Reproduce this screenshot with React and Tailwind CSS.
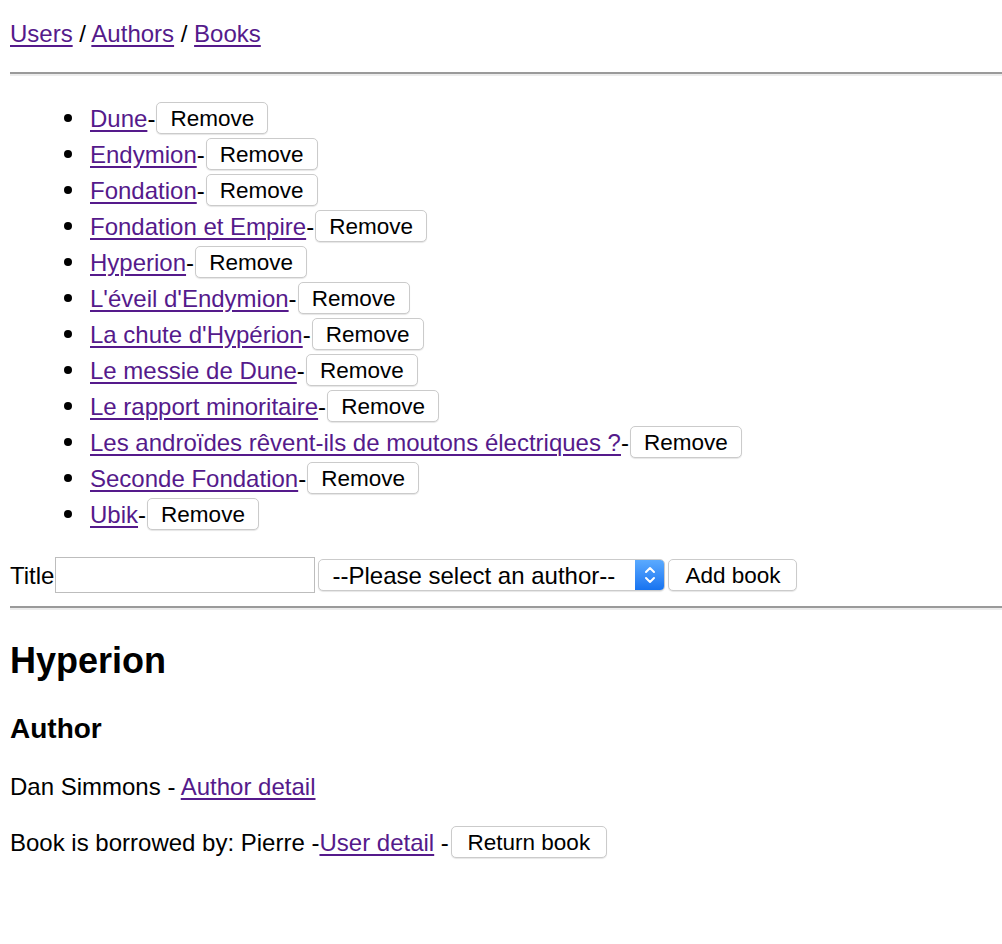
import React from "react";

const books = [
  "Dune",
  "Endymion",
  "Fondation",
  "Fondation et Empire",
  "Hyperion",
  "L'éveil d'Endymion",
  "La chute d'Hypérion",
  "Le messie de Dune",
  "Le rapport minoritaire",
  "Les androïdes rêvent-ils de moutons électriques ?",
  "Seconde Fondation",
  "Ubik",
];

const linkCls = "text-[#551a8b] underline decoration-[1.5px] underline-offset-[3px]";

function Button({ children, className = "" }) {
  return (
    <button
      className={
        "flex h-[32px] items-center justify-center pt-[2px] border border-[#cbcbcb] rounded-[5px] bg-white text-[22.5px] leading-none text-black shadow-[0_1px_1px_rgba(0,0,0,0.1)] " +
        className
      }
    >
      {children}
    </button>
  );
}

function Rule({ className }) {
  return (
    <div
      className={
        "h-[4px] border-t-2 border-b-2 border-t-[#9a9a9a] border-b-[#ececec] " +
        className
      }
    />
  );
}

export default function App() {
  return (
    <div className="min-h-screen bg-white pl-[8px] pt-[20px] font-['Liberation_Sans',Arial,sans-serif] text-[24px] leading-[27px] text-black">
      {/* breadcrumb */}
      <nav className="h-[27px] whitespace-pre pl-[2px]">
        <a href="#" className={linkCls}>Users</a>
        {" / "}
        <a href="#" className={linkCls}>Authors</a>
        {" / "}
        <a href="#" className={linkCls}>Books</a>
      </nav>

      <Rule className="mt-[25px] ml-[2px]" />

      {/* books list */}
      <ul className="mt-[24px] pl-[56px]">
        {books.map((b) => (
          <li key={b} className="flex h-[36px] items-center">
            <span className="mr-[18px] h-[8px] w-[8px] rounded-full bg-black" />
            <a href="#" className={linkCls}>{b}</a>
            <span className="mr-[1px]">-</span>
            <Button className="w-[112px]">Remove</Button>
          </li>
        ))}
      </ul>

      {/* add book form */}
      <div className="mt-[25px] flex h-[36px] items-center pl-[2px]">
        <span>Title</span>
        <input
          type="text"
          className="ml-[1px] h-[36px] w-[260px] border border-[#bdbdbd] bg-white outline-none"
        />
        <div className="ml-[3px] flex h-[32px] w-[347px] overflow-hidden rounded-[5px] border border-[#cbcbcb] bg-white shadow-[0_1px_1px_rgba(0,0,0,0.1)]">
          <span className="flex flex-1 items-center pl-[13px] pt-[1px] text-[24px]">
            --Please select an author--
          </span>
          <span className="flex w-[29px] items-center justify-center bg-gradient-to-b from-[#5aaaff] to-[#1673f0]">
            <svg width="12" height="20" viewBox="0 0 12 20" fill="none" stroke="white" strokeWidth="2" strokeLinecap="round" strokeLinejoin="round">
              <path d="M2 7 L6 3 L10 7" />
              <path d="M2 13 L6 17 L10 13" />
            </svg>
          </span>
        </div>
        <Button className="ml-[3px] w-[129px]">Add book</Button>
      </div>

      <Rule className="mt-[13px] ml-[2px]" />

      {/* book detail */}
      <section>
        <h1 className="mt-[30px] pl-[2px] text-[36px] font-bold leading-[41px]">Hyperion</h1>
        <h3 className="mt-[32px] pl-[2px] text-[28px] font-bold leading-[32px]">Author</h3>
        <p className="mt-[28px] pl-[2px]">
          Dan Simmons - <a href="#" className={linkCls}>Author detail</a>
        </p>
        <div className="mt-[26px] flex h-[32px] items-center whitespace-pre pl-[2px]">
          <span>Book is borrowed by: Pierre -</span>
          <a href="#" className={linkCls}>User detail</a>
          <span> -</span>
          <Button className="ml-[2px] w-[156px]">Return book</Button>
        </div>
      </section>
    </div>
  );
}
